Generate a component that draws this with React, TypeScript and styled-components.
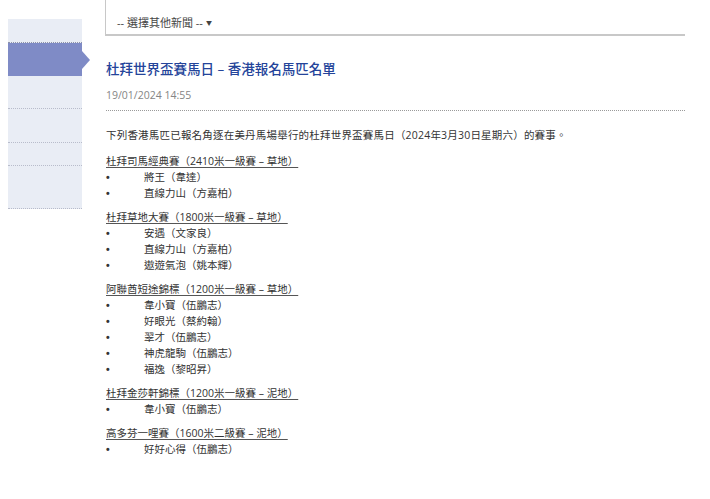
import React from 'react';
import styled, { createGlobalStyle } from 'styled-components';

const GlobalStyle = createGlobalStyle`
  html, body {
    margin: 0;
    padding: 0;
    background: #fff;
  }
  body {
    font-family: "Open Sans", "Noto Sans CJK TC", sans-serif;
    color: #333;
  }
`;

const Page = styled.div`
  display: flex;
  align-items: flex-start;
  width: 710px;
  padding-left: 8px;
  box-sizing: border-box;
`;

const Sidebar = styled.ul`
  list-style: none;
  margin: 19px 0 0;
  padding: 0;
  width: 74px;
  background: #e9edf5;
  display: flex;
  flex-direction: column;
`;

const SideItem = styled.li<{ $h: number; $active?: boolean; $dark?: boolean }>`
  position: relative;
  height: ${(p) => p.$h}px;
  background: ${(p) => (p.$active ? '#7f8bc6' : 'transparent')};
  border-bottom: ${(p) =>
    p.$active ? 'none' : `1px dotted ${p.$dark ? '#8e93a8' : '#b8bccb'}`};

  ${(p) =>
    p.$active &&
    `
    &::after {
      content: '';
      position: absolute;
      right: -8px;
      top: 8px;
      border-style: solid;
      border-width: 9px 0 9px 8px;
      border-color: transparent transparent transparent #7f8bc6;
    }
  `}
`;

const Main = styled.main`
  margin-left: 23px;
  width: 580px;
`;

const Selector = styled.div`
  border-left: 1px solid #c8c8c8;
  border-bottom: 2px solid #c8c8c8;
  padding: 16px 0 4px 11px;
  height: 14px;
  font-size: 11px;
  line-height: 14px;
  color: #444;
`;

const Caret = styled.span`
  display: inline-block;
  margin-left: 3px;
  font-size: 6px;
  vertical-align: 2px;
`;

const Title = styled.h1`
  margin: 23px 0 0 1px;
  font-size: 13.5px;
  line-height: 20px;
  font-weight: 500;
  color: #24449a;
`;

const Stamp = styled.div`
  margin: 8px 0 0 1px;
  padding-bottom: 7px;
  font-size: 10.5px;
  line-height: 16px;
  color: #858585;
  border-bottom: 1px dotted #9a9a9a;
`;

const Intro = styled.p`
  margin: 16px 0 10px 1px;
  font-size: 10.5px;
  line-height: 16px;
  letter-spacing: 0.2px;
  color: #333;
`;

const Race = styled.section`
  margin: 0 0 8px 1px;
  font-size: 10.5px;
  line-height: 16px;
  color: #333;
`;

const RaceName = styled.div`
  text-decoration: underline;
  text-decoration-color: #555;
  text-underline-offset: 2px;
`;

const Entry = styled.div`
  display: flex;
`;

const Bullet = styled.span`
  width: 38px;
  padding-left: 0;
  flex-shrink: 0;
  font-family: "Liberation Sans", sans-serif;
  font-weight: bold;
`;

type RaceData = { name: string; horses: string[] };

const races: RaceData[] = [
  {
    name: '杜拜司馬經典賽（2410米一級賽 – 草地）',
    horses: ['將王（韋達）', '直線力山（方嘉柏）'],
  },
  {
    name: '杜拜草地大賽（1800米一級賽 – 草地）',
    horses: ['安遇（文家良）', '直線力山（方嘉柏）', '遨遊氣泡（姚本輝）'],
  },
  {
    name: '阿聯酋短途錦標（1200米一級賽 – 草地）',
    horses: [
      '韋小寶（伍鵬志）',
      '好眼光（蔡約翰）',
      '翠才（伍鵬志）',
      '神虎龍駒（伍鵬志）',
      '福逸（黎昭昇）',
    ],
  },
  {
    name: '杜拜金莎軒錦標（1200米一級賽 – 泥地）',
    horses: ['韋小寶（伍鵬志）'],
  },
  {
    name: '高多芬一哩賽（1600米二級賽 – 泥地）',
    horses: ['好好心得（伍鵬志）'],
  },
];

const App = () => {
  return (
    <Page>
      <GlobalStyle />
      <Sidebar>
        <SideItem $h={23} $dark />
        <SideItem $h={33} $active />
        <SideItem $h={32} />
        <SideItem $h={33} />
        <SideItem $h={22} />
        <SideItem $h={42} />
      </Sidebar>
      <Main>
        <Selector>
          -- 選擇其他新聞 --<Caret>▼</Caret>
        </Selector>
        <Title>杜拜世界盃賽馬日 – 香港報名馬匹名單</Title>
        <Stamp>19/01/2024 14:55</Stamp>
        <Intro>
          下列香港馬匹已報名角逐在美丹馬場舉行的杜拜世界盃賽馬日（2024年3月30日星期六）的賽事。
        </Intro>
        {races.map((race) => (
          <Race key={race.name}>
            <RaceName>{race.name}</RaceName>
            {race.horses.map((horse, i) => (
              <Entry key={i}>
                <Bullet>•</Bullet>
                <span>{horse}</span>
              </Entry>
            ))}
          </Race>
        ))}
      </Main>
    </Page>
  );
};

export default App;
